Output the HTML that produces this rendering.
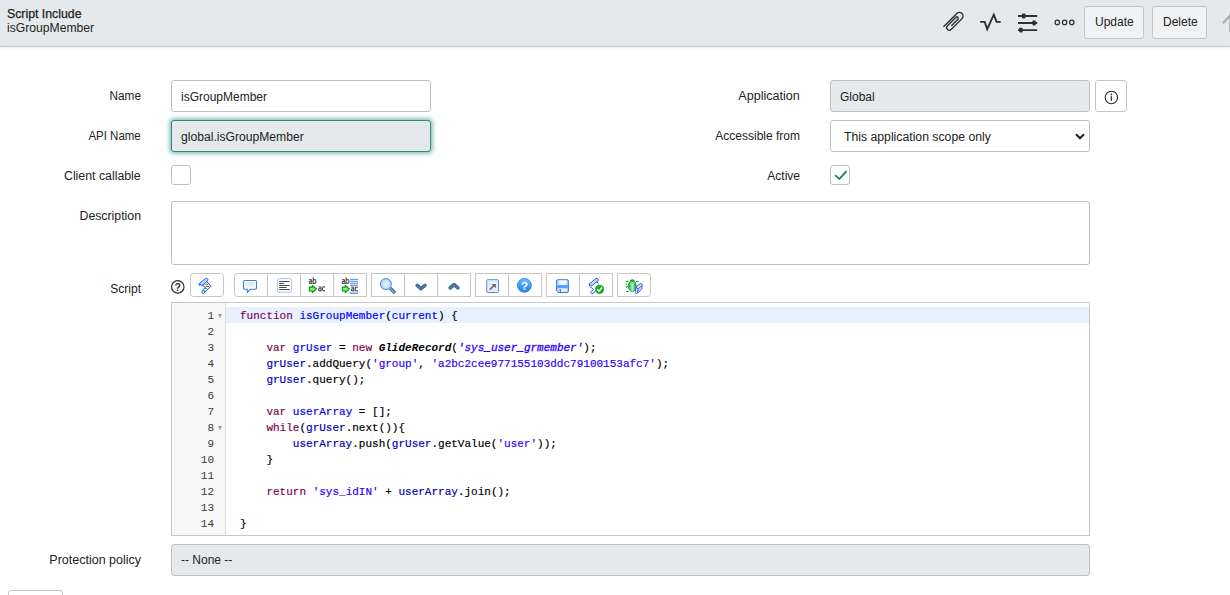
<!DOCTYPE html>
<html>
<head>
<meta charset="utf-8">
<title>Script Include</title>
<style>
*{box-sizing:border-box;margin:0;padding:0}
html,body{width:1230px;height:595px;overflow:hidden;background:#fff}
body{font-family:"Liberation Sans",sans-serif;font-size:12px;color:#222;position:relative}
.abs{position:absolute}
#hdr{left:0;top:0;width:1230px;height:47px;background:#e6e9eb;border-bottom:1px solid #cacbcc;box-shadow:0 1px 2px rgba(0,0,0,.09)}
.t{position:absolute;white-space:nowrap;line-height:16px;transform-origin:0 0}
.lbl{position:absolute;white-space:nowrap;line-height:16px;text-align:right;transform-origin:100% 0}
.inp{position:absolute;height:32px;border:1px solid #bdc0c4;border-radius:3px;background:#fff}
.ro{background:#e6e9eb}
.btn{position:absolute;border:1px solid #c3c6c8;border-radius:3px;background:#f0f2f4}
.cb{position:absolute;width:20px;height:20px;border:1px solid #bdc0c4;border-radius:3px;background:#fff}
.tb{position:absolute;top:273px;height:25px;border:1px solid #c9c9c9;border-radius:3px;background:#fff;overflow:hidden}
.tb i{position:absolute;top:0;width:1px;height:25px;background:#c9c9c9}
#ed{left:171px;top:302px;width:919px;height:234px;border:1px solid #c8c8c8;background:#fff}
#gut{left:0;top:0;width:54px;height:232px;background:#f7f7f7;border-right:1px solid #ddd}
#act{left:54px;top:4px;width:863px;height:16px;background:#e8f2ff}
.ln{position:absolute;left:0;width:42px;margin-top:1px;text-align:right;font-family:"Liberation Mono",monospace;font-size:11px;line-height:16px;color:#3a3a3a}
.cl{position:absolute;left:68px;margin-top:1px;-webkit-text-stroke:0.18px currentColor;font-family:"Liberation Mono",monospace;font-size:11px;line-height:16px;color:#000;white-space:pre}
.fold{position:absolute;left:46px;width:0;height:0;border-left:2.5px solid transparent;border-right:2.5px solid transparent;border-top:4px solid #999}
.k{color:#7f0055}
.d{color:#0000ff}
.v{color:#0000c0}
.s{color:#2a00ff}
.g{font-weight:bold;font-style:italic;color:#000;-webkit-text-stroke:0}
.gs{font-style:italic;color:#2a00ff;-webkit-text-stroke:0.3px #2a00ff}
</style>
</head>
<body>
<div id="hdr" class="abs"></div>
<div class="t" id="h1" style="transform:scaleX(1.025);left:7px;top:6px;-webkit-text-stroke:0.25px #222">Script Include</div>
<div class="t" id="h2" style="transform:scaleX(1.012);left:7px;top:20px">isGroupMember</div>


<svg class="abs" style="left:935px;top:5px" width="150" height="35" viewBox="0 0 150 35" fill="none" stroke="#2e2e2e">
<!-- paperclip -->
<g transform="translate(18.8,16.7) rotate(-45)" stroke-width="1.4" stroke-linecap="round">
<path d="M-10.5,-3.6 L7.95,-3.6 A3.6,3.6 0 0 1 7.95,3.6 L-7.35,3.6 A2.6,2.6 0 0 1 -7.35,-1.6 L4.55,-1.6 A1.4,1.4 0 0 1 4.55,1.2 L-4.2,1.2"/>
</g>
<!-- activity -->
<path d="M45.1,16.9 H49.7 L52.2,24.2 L58.8,9.6 L61.6,16.9 H65.7" stroke-width="1.9" stroke-linejoin="miter" stroke-linecap="butt"/>
<!-- sliders -->
<g stroke-width="1.8">
<path d="M83,11 H102.2 M83,18 H102.2 M83,25.2 H102.2"/>
</g>
<g fill="#2e2e2e" stroke="none">
<rect x="87" y="8.6" width="3.4" height="4.8" rx="0.8"/>
<rect x="97.4" y="15.6" width="3.4" height="4.8" rx="0.8"/>
<rect x="84.2" y="22.8" width="3.4" height="4.8" rx="0.8"/>
</g>
<!-- ellipsis -->
<g stroke-width="1.2">
<circle cx="122.3" cy="17.4" r="2.2"/><circle cx="129.6" cy="17.4" r="2.2"/><circle cx="136.8" cy="17.4" r="2.2"/>
</g>
</svg>
<svg class="abs" style="left:1216px;top:8px" width="15" height="28" viewBox="0 0 15 28" fill="none" stroke="#a9acae" stroke-width="2.2">
<path d="M7,15.2 L15.2,6.4 M14.4,6 V24"/>
</svg>
<div class="btn" style="left:1084px;top:6px;width:60px;height:33px"></div>
<div class="t" id="bu" style="left:1095px;top:14px">Update</div>
<div class="btn" style="left:1152px;top:6px;width:55px;height:33px"></div>
<div class="t" id="bd" style="left:1163px;top:14px">Delete</div>

<div class="lbl" id="l1" style="transform:scaleX(0.985);right:1089px;top:88px">Name</div>
<div class="lbl" id="l2" style="transform:scaleX(0.955);right:1089px;top:128px">API Name</div>
<div class="lbl" id="l3" style="transform:scaleX(1.027);right:1089px;top:168px">Client callable</div>
<div class="lbl" id="l4" style="transform:scaleX(1.025);right:1089px;top:208px">Description</div>
<div class="lbl" id="l5" style="right:1089px;top:281px">Script</div>
<div class="lbl" id="l6" style="transform:scaleX(1.042);right:1089px;top:552px">Protection policy</div>
<div class="lbl" id="r1" style="transform:scaleX(1.046);right:430px;top:88px">Application</div>
<div class="lbl" id="r2" style="right:430px;top:128px">Accessible from</div>
<div class="lbl" id="r3" style="right:430px;top:168px">Active</div>

<div class="inp" style="left:171px;top:80px;width:260px"></div>
<div class="t" id="v1" style="left:181px;top:89px">isGroupMember</div>
<div class="inp ro" style="left:171px;top:120px;width:260px;border:1px solid #278c7c;box-shadow:0 0 5px 1px rgba(39,140,124,.7)"></div>
<div class="t" id="v2" style="transform:scaleX(1.011);left:181px;top:129px">global.isGroupMember</div>
<div class="cb" style="left:171px;top:165px"></div>

<div class="inp ro" style="left:830px;top:80px;width:260px"></div>
<div class="t" id="v3" style="left:840px;top:89px">Global</div>
<div class="btn" style="left:1095px;top:80px;width:32px;height:32px;background:#fff"></div>
<div class="inp" style="left:830px;top:120px;width:260px"></div>
<div class="t" id="v4" style="transform:scaleX(1.019);left:844px;top:129px">This application scope only</div>
<div class="cb" style="left:830px;top:165px"></div>


<svg class="abs" style="left:1095px;top:80px" width="32" height="32" viewBox="0 0 32 32" fill="none" stroke="#2e2e2e">
<circle cx="16.4" cy="17.5" r="6.2" stroke-width="1.1"/>
<path d="M16.4,16.2 V20.8" stroke-width="1.3"/>
<circle cx="16.4" cy="14.4" r="0.85" fill="#2e2e2e" stroke="none"/>
</svg>
<svg class="abs" style="left:1070px;top:128px" width="20" height="16" viewBox="0 0 20 16" fill="none" stroke="#222" stroke-width="2.1">
<path d="M6,6.2 L10,10.2 L14,6.2"/>
</svg>
<svg class="abs" style="left:830px;top:165px" width="20" height="20" viewBox="0 0 20 20" fill="none" stroke="#217f71" stroke-width="1.9">
<path d="M5,10.1 L9.4,14 L16.6,6.2"/>
</svg>
<div class="inp" style="left:171px;top:201px;width:919px;height:64px"></div>


<svg class="abs" style="left:165px;top:268px" width="495" height="34" viewBox="165 268 495 34" fill="none">
<defs>
<linearGradient id="gb" x1="0" y1="0" x2="0" y2="1"><stop offset="0" stop-color="#d6e4f7"/><stop offset="1" stop-color="#f4f8fd"/></linearGradient>
<radialGradient id="gm" cx=".5" cy=".5" r=".6"><stop offset="0" stop-color="#f0f8ff"/><stop offset="1" stop-color="#a4cdfb"/></radialGradient>
<linearGradient id="gh" x1="0" y1="0" x2="0" y2="1"><stop offset="0" stop-color="#6cc0ff"/><stop offset="1" stop-color="#1a7fee"/></linearGradient>
<linearGradient id="gg" x1="0" y1="0" x2="1" y2="0"><stop offset="0" stop-color="#0aa02e"/><stop offset=".5" stop-color="#b8f0c0"/><stop offset="1" stop-color="#0aa02e"/></linearGradient>
</defs>
<!-- help circle -->
<circle cx="177.8" cy="286.9" r="6.2" stroke="#2e2e2e" stroke-width="1.2"/>
<text x="177.6" y="290.7" font-family="Liberation Sans, sans-serif" font-size="10.5" font-weight="bold" fill="#2e2e2e" text-anchor="middle">?</text>
<!-- button frames -->
<g stroke="#c6c6c6" stroke-width="1" fill="#fff">
<rect x="190.5" y="273.5" width="33" height="23" rx="3"/>
<path d="M237.5,273.5 H366.5 V296.5 H237.5 A3,3 0 0 1 234.5,293.5 V276.5 A3,3 0 0 1 237.5,273.5 Z"/>
<rect x="371.5" y="273.5" width="99" height="23"/>
<rect x="475.5" y="273.5" width="66" height="23"/>
<rect x="546.5" y="273.5" width="66" height="23"/>
<path d="M617.5,273.5 H647.5 A3,3 0 0 1 650.5,276.5 V293.5 A3,3 0 0 1 647.5,296.5 H617.5 Z"/>
<path d="M267.5,273.5 V296.5 M300.5,273.5 V296.5 M333.5,273.5 V296.5 M404.5,273.5 V296.5 M437.5,273.5 V296.5 M508.5,273.5 V296.5 M579.5,273.5 V296.5"/>
</g>

<!-- 1 script scroll -->
<g stroke="#1f5cf0" stroke-width="1" stroke-linejoin="round">
<path d="M200.2,284 L206.6,281.2 L211,286.4 L204.6,292.3 L202.4,290.4 L205.6,287.4 Z" fill="#eef3fd"/>
<path d="M199.5,283.6 L205.6,278.4 A1.7,1.7 0 0 1 207.8,280.6 L201.6,285.8 Z" fill="#c9dafa"/>
<path d="M199.5,283.4 V285.6" stroke-width="1.6"/>
<circle cx="203.3" cy="292" r="1.4" fill="#fff"/>
</g>
<path d="M204.9,284.4 H208" stroke="#1fc01f" stroke-width="1"/>
<path d="M206.1,286.5 H209" stroke="#f02a1a" stroke-width="1"/>
<path d="M204,288.5 H207" stroke="#1fc01f" stroke-width="1"/>
<!-- 2 comment bubble -->
<path d="M244.8,280.5 H255.2 A1.3,1.3 0 0 1 256.5,281.8 V288 A1.3,1.3 0 0 1 255.2,289.3 H250.2 L247.4,292.4 L247.2,289.3 H244.8 A1.3,1.3 0 0 1 243.5,288 V281.8 A1.3,1.3 0 0 1 244.8,280.5 Z" stroke="#3b7fd1" stroke-width="1.1" fill="#fff"/>
<rect x="245.3" y="282.2" width="9.4" height="5.4" fill="url(#gb)"/>
<!-- 3 format -->
<rect x="277.6" y="278.6" width="13.8" height="13.6" rx="1.5" stroke="#a9c1ff" stroke-width="1" fill="#fff"/>
<path d="M279.2,281.5 H289.5 M279.2,283.5 H284 M279.2,285.5 H289.8 M279.2,287.5 H286.6 M279.2,289.5 H289.8" stroke="#4a4a4a" stroke-width="1"/>
<!-- 4 replace -->
<g stroke="#555" stroke-width="1.05" fill="none"><path transform="translate(308.7,284) scale(1.04,1.2)" d="M0.5,-3.6 H2 Q3,-3.6 3,-2.7 V0 M3,-2.1 H1.4 Q0.5,-2.1 0.5,-1.3 Q0.5,-0.5 1.4,-0.5 H3"/><path transform="translate(312.7,284) scale(1.04,1.2)" d="M0.5,-5.6 V0 M0.5,-3.6 H2.1 Q3,-3.6 3,-2.7 V-1.4 Q3,-0.5 2.1,-0.5 H0.5"/><path transform="translate(318,291.2) scale(1.04,1.2)" d="M0.5,-3.6 H2 Q3,-3.6 3,-2.7 V0 M3,-2.1 H1.4 Q0.5,-2.1 0.5,-1.3 Q0.5,-0.5 1.4,-0.5 H3"/><path transform="translate(322,291.2) scale(1.04,1.2)" d="M3,-3.6 H1.4 Q0.5,-3.6 0.5,-2.7 V-1.4 Q0.5,-0.5 1.4,-0.5 H3"/><path transform="translate(341.7,284) scale(1.04,1.2)" d="M0.5,-3.6 H2 Q3,-3.6 3,-2.7 V0 M3,-2.1 H1.4 Q0.5,-2.1 0.5,-1.3 Q0.5,-0.5 1.4,-0.5 H3"/><path transform="translate(345.7,284) scale(1.04,1.2)" d="M0.5,-5.6 V0 M0.5,-3.6 H2.1 Q3,-3.6 3,-2.7 V-1.4 Q3,-0.5 2.1,-0.5 H0.5"/><path transform="translate(350.8,291.4) scale(1.04,1.2)" d="M0.5,-3.6 H2 Q3,-3.6 3,-2.7 V0 M3,-2.1 H1.4 Q0.5,-2.1 0.5,-1.3 Q0.5,-0.5 1.4,-0.5 H3"/><path transform="translate(354.8,291.4) scale(1.04,1.2)" d="M3,-3.6 H1.4 Q0.5,-3.6 0.5,-2.7 V-1.4 Q0.5,-0.5 1.4,-0.5 H3"/></g>
<path d="M309.4,287.1 H312.3 V285.5 L316.4,289.05 L312.3,292.6 V291 H309.4 Z" fill="#7df07d" stroke="#0a960a" stroke-width="1.15" stroke-linejoin="round"/>
<path d="M342.4,287.1 H345.3 V285.5 L349.4,289.05 L345.3,292.6 V291 H342.4 Z" fill="#7df07d" stroke="#0a960a" stroke-width="1.15" stroke-linejoin="round"/>
<!-- 5 replace all lines -->
<path d="M350,279.3 H358 M350,281.3 H358 M350,283.3 H358 M350,285.3 H358" stroke="#4a8ad4" stroke-width="1"/>
<path d="M350.2,292.2 V293.2 H358" stroke="#2a6bf0" stroke-width="1"/>
<!-- 6 magnifier -->
<path d="M390.2,288.2 L395,293" stroke="#3a4a66" stroke-width="3.2" stroke-linecap="butt"/>
<path d="M390.4,288.4 L394.6,292.6" stroke="#6fa8e8" stroke-width="1.8"/>
<circle cx="385.9" cy="284.1" r="5.5" fill="url(#gm)" stroke="#3b82d6" stroke-width="1"/>
<!-- 7,8 chevrons -->
<g stroke-linecap="round" stroke-linejoin="round">
<path d="M417.2,285.4 L421,288.7 L424.9,285.4" stroke="#2a6bd6" stroke-width="3.7"/>
<path d="M417.3,285.4 L421,288.5 L424.8,285.4" stroke="#6a6f78" stroke-width="2.1"/>
<path d="M450.2,287.9 L454,284.6 L457.9,287.9" stroke="#2a6bd6" stroke-width="3.7"/>
<path d="M450.3,287.9 L454,284.8 L457.8,287.9" stroke="#6a6f78" stroke-width="2.1"/>
</g>
<!-- 9 popout -->
<rect x="486.8" y="279.8" width="11.6" height="12.6" rx="0.8" fill="#fff" stroke="#3b7be0" stroke-width="1"/>
<rect x="487.3" y="280.3" width="10.6" height="2" fill="#d5e4f8"/>
<rect x="488" y="283.2" width="9.2" height="8.2" fill="#e6ebf4"/>
<path d="M489.9,289.6 L494.4,285.1" stroke="#656d80" stroke-width="1.6"/>
<path d="M491.6,283.9 H495.9 V288.2 Z" fill="#656d80"/>
<!-- 10 help -->
<circle cx="524.4" cy="285.4" r="6.9" fill="url(#gh)" stroke="#2a7ae0" stroke-width="0.9"/>
<text x="524.4" y="289.6" font-family="Liberation Sans, sans-serif" font-size="11.5" font-weight="bold" fill="#fff" text-anchor="middle">?</text>
<!-- 11 save -->
<path d="M557.7,279.8 H567.3 A1,1 0 0 1 568.3,280.8 V291.4 A1,1 0 0 1 567.3,292.4 H558.2 L556.7,291 V280.8 A1,1 0 0 1 557.7,279.8 Z" fill="#cfe2fb" stroke="#2563eb" stroke-width="1"/>
<rect x="557.2" y="284.9" width="10.6" height="3.3" fill="#4aa8f5"/>
<rect x="558.8" y="280.3" width="7.4" height="4.4" fill="#f2f6fd"/>
<rect x="559" y="288.6" width="7.2" height="3.4" fill="#e8edf7"/>
<rect x="559.7" y="289" width="1.1" height="3" fill="#2563eb"/>
<!-- 12 script check -->
<g stroke="#1f5cf0" stroke-width="1" stroke-linejoin="round">
<path d="M589.4,283.8 L596,278.5 A1.7,1.7 0 0 1 598.2,280.7 L591.6,286 Z" fill="#c9dafa"/>
<path d="M589.4,283.6 V286 L593.6,289.6 L591.2,291.4 A1.4,1.4 0 1 0 593.6,292.6 L595.4,291.4"/>
<path d="M596.6,281.6 L598.6,283.6"/>
</g>
<circle cx="599.5" cy="289.4" r="4.3" fill="#1fae2e" stroke="#14902a" stroke-width="0.6"/>
<path d="M597.3,289.4 L599,291.3 L601.9,287.5" stroke="#fff" stroke-width="1.3"/>
<!-- 13 bug -->
<g stroke="#0aa02e" stroke-width="1">
<path d="M626,281.5 H628.6 M626.4,286.6 H628.4 M626,291.5 H628.6 M636,281.5 H638.6"/>
<path d="M626.3,286.3 V288 M626.3,283.6 V285.2" stroke-width="0.8"/>
</g>
<ellipse cx="632.3" cy="286" rx="3.9" ry="5.6" fill="url(#gg)" stroke="#0aa02e" stroke-width="0.8"/>
<path d="M630.2,281.2 A2.2,2.2 0 0 1 634.4,281.2 Z" fill="#0aa02e" stroke="#0aa02e" stroke-width="0.8"/>
<g stroke="#1f5cf0" stroke-width="1" stroke-linejoin="round">
<path d="M636,287.2 L640.2,283.6 A1.6,1.6 0 0 1 642.2,285.6 L641.8,288.8 L637.6,293.2 A1.4,1.4 0 0 1 635.4,291.6 Z" fill="#dfe9fc"/>
<path d="M636.2,287.4 L638.2,289 L642,285.4 M638.2,289 L637.4,292.6"/>
</g>

</svg>
<div id="ed" class="abs">
<div id="gut" class="abs"></div>
<div id="act" class="abs"></div>
<div class="ln" style="top:4px">1</div>
<div class="cl" style="top:4px"><span class="k">function</span> <span class="d">isGroupMember</span>(<span class="d">current</span>) {</div>
<div class="ln" style="top:20px">2</div>
<div class="ln" style="top:36px">3</div>
<div class="cl" style="top:36px">    <span class="k">var</span> <span class="d">grUser</span> = <span class="k">new</span> <span class="g">GlideRecord</span>(<span class="gs">'sys_user_grmember'</span>);</div>
<div class="ln" style="top:52px">4</div>
<div class="cl" style="top:52px">    <span class="v">grUser</span>.addQuery(<span class="s">'group'</span>, <span class="s">'a2bc2cee977155103ddc79100153afc7'</span>);</div>
<div class="ln" style="top:68px">5</div>
<div class="cl" style="top:68px">    <span class="v">grUser</span>.query();</div>
<div class="ln" style="top:84px">6</div>
<div class="ln" style="top:100px">7</div>
<div class="cl" style="top:100px">    <span class="k">var</span> <span class="d">userArray</span> = [];</div>
<div class="ln" style="top:116px">8</div>
<div class="cl" style="top:116px">    <span class="k">while</span>(<span class="v">grUser</span>.next()){</div>
<div class="ln" style="top:132px">9</div>
<div class="cl" style="top:132px">        <span class="v">userArray</span>.push(<span class="v">grUser</span>.getValue(<span class="s">'user'</span>));</div>
<div class="ln" style="top:148px">10</div>
<div class="cl" style="top:148px">    }</div>
<div class="ln" style="top:164px">11</div>
<div class="ln" style="top:180px">12</div>
<div class="cl" style="top:180px">    <span class="k">return</span> <span class="s">'sys_idIN'</span> + <span class="v">userArray</span>.join();</div>
<div class="ln" style="top:196px">13</div>
<div class="ln" style="top:212px">14</div>
<div class="cl" style="top:212px">}</div>
<div class="fold" style="top:11px"></div>
<div class="fold" style="top:123px"></div>
</div>

<div class="inp ro" style="left:171px;top:544px;width:919px;height:32px"></div>
<div class="t" id="v5" style="left:181px;top:552px">-- None --</div>
<div class="btn" style="left:8px;top:590px;width:55px;height:32px;background:#fff"></div>
</body>
</html>
